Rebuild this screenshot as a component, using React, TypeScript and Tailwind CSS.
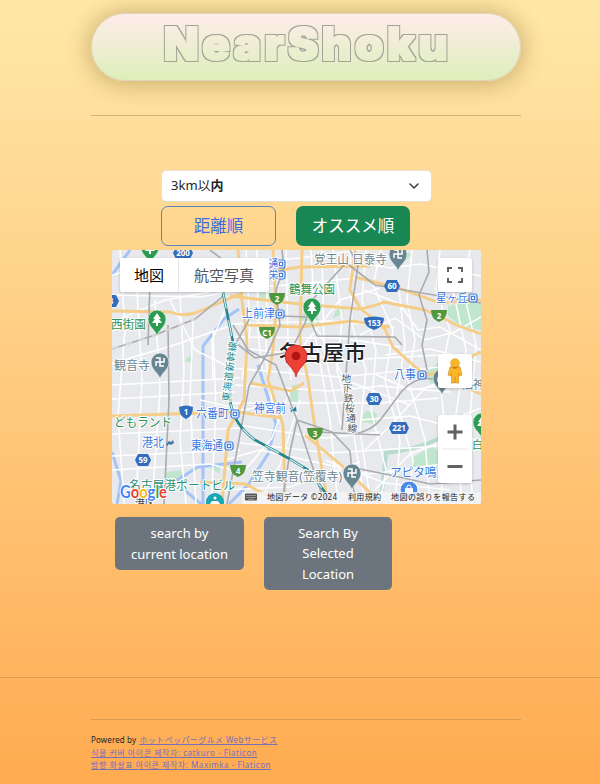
import React from "react";

const JP = "font-['Noto_Sans','Noto_Sans_CJK_JP',sans-serif]";

type Label = { t: string; x: number; y: number; w: number; s: number; c: string };

const BLUE = "#3b78e0";
const GREEN = "#2a9255";
const SLATE = "#6c8792";

const labels: Label[] = [
  { t: "通", x: 269, y: 268, w: 9, s: 11, c: BLUE },
  { t: "栄", x: 269, y: 279, w: 9, s: 11, c: BLUE },
  { t: "覚王山 日泰寺", x: 314, y: 264, w: 73, s: 12, c: SLATE },
  { t: "鶴舞公園", x: 289, y: 294, w: 46, s: 12, c: GREEN },
  { t: "上前津", x: 242, y: 318, w: 33, s: 12, c: BLUE },
  { t: "西街園", x: 111, y: 329, w: 35, s: 12, c: GREEN },
  { t: "観音寺", x: 114, y: 370, w: 36, s: 12, c: SLATE },
  { t: "星ヶ丘", x: 436, y: 302, w: 32, s: 11, c: BLUE },
  { t: "八事", x: 394, y: 379, w: 22, s: 12, c: BLUE },
  { t: "どもランド", x: 114, y: 427, w: 58, s: 12, c: GREEN },
  { t: "港北", x: 142, y: 447, w: 22, s: 12, c: BLUE },
  { t: "六番町", x: 196, y: 418, w: 33, s: 12, c: BLUE },
  { t: "東海通", x: 191, y: 450, w: 32, s: 12, c: BLUE },
  { t: "神宮前", x: 254, y: 413, w: 32, s: 12, c: BLUE },
  { t: "名古屋港ポートビル", x: 129, y: 490, w: 106, s: 12, c: "#249078" },
  { t: "笠寺観音(笠覆寺)", x: 252, y: 481, w: 90, s: 12, c: SLATE },
  { t: "アピタ鳴海", x: 390, y: 477, w: 58, s: 12, c: BLUE },
  { t: "福神", x: 461, y: 389, w: 24, s: 12, c: SLATE },
  { t: "白", x: 472, y: 449, w: 11, s: 11, c: GREEN },
  { t: "港区", x: 135, y: 507, w: 20, s: 10, c: "#3c4043" },
];

const minorRoads = [
  "M112 275L160 262L205 266", "M112 295L200 297L250 288", "M112 322L165 300L210 292", "M112 363L165 348L230 326",
  "M120 250L125 330L118 415L124 504", "M137 290L142 380L136 504", "M155 300L160 390L152 504", "M180 295L184 370L180 440L186 504",
  "M193 320L190 400L196 504", "M213 330L216 410L211 504", "M225 310L212 340L213 380", "M170 300L195 350L235 370",
  "M112 385L240 378", "M112 399L235 392", "M112 434L240 428", "M112 456L240 450", "M112 470L210 464L240 472",
  "M230 265L300 258L360 250", "M235 289L300 284L365 277", "M230 324L330 321L395 327", "M228 337L340 338L400 347",
  "M250 349L345 360L440 355", "M230 368L340 377L440 367", "M235 385L330 391L380 386L450 392", "M230 403L380 403L438 398",
  "M238 425L325 438L380 432", "M240 443L330 453L440 446", "M225 460L260 450L370 474L450 463", "M220 490L290 487L360 462",
  "M246 250L250 330L242 380", "M257 250L258 330L262 370", "M267 282L266 360L274 415", "M286 250L288 340L291 380",
  "M311 250L316 340L330 420L338 504", "M322 250L324 350L341 425", "M333 250L342 320L337 370L353 430L365 504",
  "M350 250L352 325L366 370L360 430L371 504", "M366 250L362 300L376 350L371 410L386 470L380 504",
  "M381 250L373 285L393 330L385 380L400 440L395 504", "M398 280L405 345L396 400L413 460L408 504",
  "M412 250L407 300L415 340L408 380L425 440L430 504", "M440 250L436 290L450 330L440 380L446 440L440 504",
  "M453 290L466 350L455 420L462 504", "M470 250L462 285L476 345L468 440L473 504",
  "M355 262L390 268L420 264L481 276", "M365 290L400 304L418 330L440 327L481 350", "M360 335L395 318L425 340L455 332L481 317",
  "M385 355L430 349L481 362", "M375 374L410 390L481 380", "M360 420L410 416L440 424L481 408",
  "M365 450L390 426L425 388L455 376", "M375 490L410 454L455 437L481 440", "M245 470L272 438L290 390", "M258 504L280 465L300 400",
  "M200 400L244 410L268 405", "M300 350L340 300L380 288", "M318 330L345 380L410 405", "M325 460L385 483L450 490",
];

const highways = [
  "M112 311L170 312Q185 318 200 311L240 294", "M112 416L170 414L238 412L282 418", "M230 278L300 267L370 266",
  "M230 296L300 304L360 309Q375 306 384 302L425 310Q445 318 456 325L481 334", "M355 277L398 288L440 303L481 300",
  "M238 250L242 300L247 340L244 400L228 430L222 504", "M273 250L276 310L273 350L268 380L283 425L285 504",
  "M302 250L300 340L308 380L316 435L328 504", "M360 308L385 329L393 347L420 371L452 382L481 394",
  "M247 325L300 327L352 321L390 327", "M200 482L245 484L270 497", "M305 435L340 464L382 504", "M355 250L350 290L360 308",
  "M250 383L291 391L304 383", "M430 375L450 365L481 352",
];

const rails = [
  "M112 349L155 335L195 319L222 297L234 268L210 250", "M151 250L148 345", "M168 325L169 400L164 504",
  "M282 250L284 268L276 290L280 325L268 352L249 386L227 504", "M250 318L236 343L255 358L290 352L305 323L312 300L345 264",
  "M233 325L248 350L276 365L297 420L325 504", "M297 420L332 432L350 451L355 504", "M297 420L290 452L282 504",
  "M427 250L429 272L419 295L427 320L422 345L427 370", "M280 316L309 317L317 336L395 337L402 345",
  "M355 434Q373 430 381 419L402 391Q416 376 433 379", "M355 468L390 475L430 484L481 480", "M345 262L375 285L481 303",
  "M350 250L358 265L350 320L342 430", "M317 432L380 435",
];

function Tree({ x, y }: { x: number; y: number }) {
  return (
    <g transform={`translate(${x} ${y})`}>
      <path d="M0 14C-2 7-9 5-9-3A9 9 0 0 1 9-3C9 5 2 7 0 14Z" fill="#2d9b51" stroke="#e9f6ec" strokeWidth=".7" />
      <path d="M0-9L-4-3H-2L-5 1H-1V4H1V1H5L2-3H4Z" fill="#fff" />
    </g>
  );
}

// Manji, the Japanese map symbol for a Buddhist temple
function Temple({ x, y }: { x: number; y: number }) {
  return (
    <g transform={`translate(${x} ${y})`}>
      <path d="M0 14C-2 7-9 5-9-3A9 9 0 0 1 9-3C9 5 2 7 0 14Z" fill="#688691" stroke="#eef2f4" strokeWidth=".7" />
      <path d="M4-7V-3H-4V1M-4-7H0V1H4" fill="none" stroke="#fff" strokeWidth="1.5" />
    </g>
  );
}

function Hex({ x, y, n }: { x: number; y: number; n: string }) {
  const r = n.length > 2 ? 10 : 8;
  return (
    <g>
      <path d={`M${x - r} ${y}l3-6h${2 * r - 6}l3 6-3 6h-${2 * r - 6}Z`} fill="#326dbd" />
      <text x={x} y={y + 3} textAnchor="middle" fontSize="8" fontWeight="700" fill="#fff">{n}</text>
    </g>
  );
}

function Route({ x, y, n, blue }: { x: number; y: number; n: string; blue?: boolean }) {
  const r = n.length > 2 ? 10 : 7;
  return (
    <g>
      <path
        d={blue ? `M${x - r} ${y - 5}Q${x} ${y - 8} ${x + r} ${y - 5}Q${x + r} ${y + 4} ${x} ${y + 7}Q${x - r} ${y + 4} ${x - r} ${y - 5}Z` : `M${x - 8} ${y - 6}H${x + 8}Q${x + 8} ${y + 3} ${x} ${y + 6}Q${x - 8} ${y + 3} ${x - 8} ${y - 6}Z`}
        fill={blue ? "#326dbd" : "#4f983d"}
      />
      <text x={x} y={y + 3} textAnchor="middle" fontSize="8" fontWeight="700" fill="#fff">{n}</text>
    </g>
  );
}

function Station({ x, y }: { x: number; y: number }) {
  return (
    <g transform={`translate(${x} ${y})`} fill="#fff" stroke={BLUE} strokeWidth="1.2">
      <rect x="-4" y="-4" width="8" height="8" rx="2" />
      <rect x="-1.7" y="-1.7" width="3.4" height="3.4" />
    </g>
  );
}

function MapCanvas() {
  return (
    <svg viewBox="112 250 369 254" className="block h-[254px] w-[369px] font-['Noto_Sans','Noto_Sans_CJK_JP',sans-serif]">
      <rect x="112" y="250" width="369" height="254" fill="#e7e9ed" />
      <g fill="#c1e6ce">
        <path d="M304 310l12 2 4 12-12 4-7-7ZM448 306l22-7 11 4v27l-21-4-12-10ZM412 458l20-12 10 8-2 16-20 1-9-4ZM365 411l12 2-1 11-15-2ZM291 386l8-2-1 18-8-1ZM166 472l15-2 2 9-18 4ZM210 468l10-6v12ZM336 310l7-1-3 6-7 3ZM397 257l8-5 8 2-8 7ZM184 361l7-6v8ZM260 292l7 1-1 6-7-2ZM425 373l13-10 9 5-5 14-11 2Z" />
        <path d="M382 491L386 453Q418 449 438 439L463 415" fill="none" stroke="#b5dccc" strokeWidth="4" />
      </g>
      <path d="M112 275L130 250M112 452L121 481L117 504M203 504V346L224 319L239 309M174 482L198 467L242 462M276 425L268 454L248 485L229 504M182 488L201 504M258 365L277 427" fill="none" stroke="#a6c3f6" strokeWidth="3" />
      <g fill="none" stroke="#fff" strokeWidth="1.5">
        {minorRoads.map((d) => <path key={d} d={d} />)}
      </g>
      <g fill="none" stroke="#f5cd86" strokeWidth="2.9">
        {highways.map((d) => <path key={d} d={d} />)}
      </g>
      <g fill="none" stroke="#a9abae" strokeWidth="1.6">
        {rails.map((d) => <path key={d} d={d} />)}
      </g>
      <path d="M112 349L155 335L195 319" fill="none" stroke="#d6d6d6" strokeWidth="2" strokeDasharray="7 7" />
      <path d="M223 293L233 342L230 400Q233 424 255 440L288 458L308 470L331 500" fill="none" stroke="#25868c" strokeWidth="2.6" />
      <path d="M223 293L233 342L230 400Q233 424 255 440L288 458L308 470L331 500" fill="none" stroke="#d7eef0" strokeWidth="1.2" strokeDasharray="16 12" />
      <Tree x={150} y={250} />
      <Tree x={157} y={322} />
      <Tree x={312} y={310} />
      <Tree x={482} y={425} />
      <Temple x={398} y={257} />
      <Temple x={160} y={365} />
      <Temple x={352} y={476} />
      <Temple x={442} y={381} />
      <Hex x={183} y={253} n="200" /><Hex x={392} y={286} n="60" />
      <Hex x={374} y={399} n="30" /><Hex x={399} y={428} n="221" />
      <Hex x={143} y={460} n="59" /><Hex x={111} y={301} n="8" />
      <Route x={374} y={323} n="153" blue /><Route x={186} y={412} n="1" blue />
      <Route x={277} y={299} n="2" /><Route x={267} y={333} n="C1" />
      <Route x={439} y={316} n="2" /><Route x={315} y={434} n="3" /><Route x={238} y={471} n="4" />
      <Station x={281} y={264} /><Station x={281} y={275} /><Station x={280} y={314} />
      <Station x={473} y={298} /><Station x={422} y={375} /><Station x={235} y={414} /><Station x={229} y={446} />
      <g stroke="#fff" strokeWidth="2" paintOrder="stroke" strokeLinejoin="round">
        {labels.map((l) => (
          <text key={l.t} x={l.x} y={l.y} textLength={l.w} lengthAdjust="spacingAndGlyphs" fontSize={l.s} fill={l.c}>{l.t}</text>
        ))}
        <text x="279" y="360" textLength="87" lengthAdjust="spacingAndGlyphs" fontSize="21" fontWeight="500" fill="#202124">名古屋市</text>
        <g fontSize="10" fill="#278b91" textAnchor="middle">
          {[..."東海道新幹線"].reverse().map((c, i) => (
            <text key={c} transform={`translate(${236 - i * 1.2} ${347 + i * 10}) rotate(-83)`}>{c}</text>
          ))}
        </g>
        <g fontSize="10" fill="#555b60" textAnchor="middle">
          {[..."地下鉄桜通線"].map((c, i) => (
            <text key={c} transform={`translate(${346 + i * 1.2} ${382 + i * 10}) rotate(5)`}>{c}</text>
          ))}
        </g>
      </g>
      <path d="M289 407l2 1 1 2 4-4 1 6-4-1-3 2 1-3Z" fill="#277da1" stroke="#fff" strokeWidth=".4" />
      <path d="M166 444l3-3 2 1 2-2 1 3-3 2-2-1-2 2Z" fill="#417ba5" />
      <circle cx="215" cy="502" r="9" fill="#19a6b4" />
      <circle cx="215" cy="498" r="1.500" fill="#fff" />
      <path d="M210 504q1-3 3-3h4q2 0 3 3Z" fill="#fff" />
      <circle cx="409" cy="490" r="9" fill="#4c89ed" stroke="#fff" />
      <rect x="405" y="488" width="8" height="6" rx="1" fill="#fff" />
      <path d="M407 489v-2a2 2 0 0 1 4 0v2" fill="none" stroke="#fff" />
      <path d="M296 377C294 367 285 365 285 356A11 11 0 0 1 307 356C307 365 298 367 296 377Z" fill="#ea4335" stroke="#c5221f" strokeWidth=".7" />
      <circle cx="296" cy="356" r="4.3" fill="#b31412" />
      <rect x="242" y="492" width="239" height="12" fill="#f5f5f5" fillOpacity=".8" />
      <g fill="#222" fontSize="8">
        <rect x="245" y="493.5" width="12" height="7" rx="1" fill="#555" />
        <path d="M246.5 495.5h9M246.5 497.5h9M248.5 499.3h5" stroke="#fff" strokeWidth=".8" strokeDasharray="1 1" />
        <text x="267" y="500" textLength="70">地図データ ©2024</text>
        <text x="348" y="500" textLength="33">利用規約</text>
        <text x="391" y="500" textLength="84">地図の誤りを報告する</text>
      </g>
      <text x="120" y="498" textLength="47" lengthAdjust="spacingAndGlyphs" fontSize="16.500" fontWeight="700" stroke="#fff" strokeWidth="2" paintOrder="stroke" className="font-['Lato',sans-serif]">
        <tspan fill="#4285f4">G</tspan><tspan fill="#ea4335">o</tspan><tspan fill="#fbbc04">o</tspan><tspan fill="#4285f4">g</tspan><tspan fill="#34a853">l</tspan><tspan fill="#ea4335">e</tspan>
      </text>
    </svg>
  );
}

function MapControls() {
  return (
    <>
      <div className="absolute left-2 top-2 flex h-[34px] w-[149px] items-center rounded-[2px] bg-white text-[15px] leading-none shadow-[0_1px_3px_#0003]">
        <span className="flex h-full w-[59px] items-center justify-center border-r border-[#e6e6e6] text-black">地図</span>
        <span className="flex flex-1 justify-center text-[#565656]">航空写真</span>
      </div>
      <button className="absolute left-[326px] top-2 flex size-[34px] items-center justify-center rounded-[2px] bg-white shadow-[0_1px_3px_#0003]">
        <svg viewBox="0 0 18 18" className="size-[18px]"><path d="M2 6V2H6M12 2h4V6M16 12v4H12M6 16H2V12" fill="none" stroke="#606060" strokeWidth="2" /></svg>
      </button>
      <button className="absolute left-[326px] top-[104px] flex size-[34px] items-center justify-center rounded-[2px] bg-white shadow-[0_1px_3px_#0003]">
        <svg viewBox="0 0 18 28" className="h-[28px] w-[18px]">
          <path d="M4 10Q9 7 14 10L16 18L13.5 19L12.5 16V26H9.5V20H8.5V26H5.5V16L4.5 19L2 18Z" fill="#f9b728" stroke="#d98b14" strokeWidth=".7" />
          <circle cx="9" cy="6" r="4.3" fill="#f9b728" stroke="#e49a1b" strokeWidth=".7" /><path d="M6 10Q9 14 12 10Z" fill="#c9781d" />
        </svg>
      </button>
      <div className="absolute left-[326px] top-[165px] flex h-[68px] w-[34px] flex-col items-center rounded-[2px] bg-white shadow-[0_1px_3px_#0003]">
        <svg viewBox="0 0 34 68" className="h-[68px] w-[34px]"><path d="M9.5 17h15M17 9.500v15M9.500 51.500h15" stroke="#626262" strokeWidth="3" /><path d="M4 34h26" stroke="#e6e6e6" /></svg>
      </div>
    </>
  );
}

export default function App() {
  return (
    <div className={`h-[784px] w-[600px] overflow-hidden bg-linear-to-b from-[#ffe8a7] to-[#ffab50] pt-[13px] text-[#212529] ${JP}`}>
      <header className="ml-[91px] w-[430px]">
        <h1 className="flex h-[68px] w-[430px] items-center justify-center rounded-full border border-[#e0d4bb] bg-linear-to-b from-[#ffecea] to-[#dcefba] shadow-[0_1px_22px_3px_rgba(95,75,25,.32)]">
          <svg viewBox="0 0 430 66" className="h-[66px] w-[430px] font-['Inter',sans-serif]">
            <defs>
              {/* Turns solid letters into a thin, slightly swollen contour */}
              <filter id="contour" x="-5%" y="-20%" width="110%" height="140%" colorInterpolationFilters="sRGB">
                <feMorphology in="SourceAlpha" operator="dilate" radius="2" result="outer" />
                <feMorphology in="SourceAlpha" operator="dilate" radius="1" result="inner" />
                <feFlood floodColor="#92978c" floodOpacity=".85" />
                <feComposite in2="outer" operator="in" result="tint" />
                <feComposite in="tint" in2="inner" operator="out" />
              </filter>
            </defs>
            <text x="72" y="46.500" textLength="289" letterSpacing="3.6" lengthAdjust="spacingAndGlyphs" fontSize="45" fontWeight="900" filter="url(#contour)">NearShoku</text>
          </svg>
        </h1>
        <hr className="mt-[34px] w-[430px] border-[#cfb579]" />
      </header>
      <main className="ml-[112px] mt-[54px] w-[369px]">
        <div className="ml-[49px] flex h-[32px] w-[271px] items-center justify-between rounded-[5px] border border-[#e8dfce] bg-white pl-[9px] pr-3 text-[13px]">
          <span>3km以<b>内</b></span>
          <svg viewBox="0 0 10 6" className="h-[6px] w-[10px]"><path d="M1 1l4 4 4-4" fill="none" stroke="#343a40" strokeWidth="1.5" strokeLinecap="round" strokeLinejoin="round" /></svg>
        </div>
        <div className="ml-[49px] mt-1 flex gap-5 text-[16.500px]">
          <button className="h-10 w-[115px] rounded-[7px] border border-[#5e83b8] text-[#416ce0]">距離順</button>
          <button className="h-10 w-[114px] rounded-[7px] bg-[#198754] text-white">オススメ順</button>
        </div>
        <div className="relative mt-1 h-[254px] overflow-hidden rounded-[2px]">
          <MapCanvas />
          <MapControls />
        </div>
        <div className="ml-[3px] mt-[13px] flex items-start gap-5 text-[13px] leading-[20.300px] text-white">
          <button className="h-[53px] w-[129px] rounded-[5px] bg-[#6c757d]">search by<br />current location</button>
          <button className="h-[73px] w-[128px] rounded-[5px] bg-[#6c757d]">Search By<br />Selected<br />Location</button>
        </div>
      </main>
      <hr className="mt-[87px] border-[#d99b50]" />
      <footer className="ml-[91px] w-[430px] text-[8px] leading-[12.600px]">
        <hr className="mb-[14px] mt-[41px] border-[#d99b50]" />
        <p className="whitespace-nowrap tracking-[.14px]">Powered by <a className="ml-px text-[#7870b9] underline tracking-[.4px]">ホットペッパーグルメ Webサービス</a></p>
        <p><a className="whitespace-nowrap tracking-[.54px] text-[#7870b9] underline">식물 커버 아이콘 제작자: catkuro - Flaticon</a></p>
        <p><a className="whitespace-nowrap tracking-[.54px] text-[#7870b9] underline">방향 화살표 아이콘 제작자: Maximka - Flaticon</a></p>
      </footer>
    </div>
  );
}
